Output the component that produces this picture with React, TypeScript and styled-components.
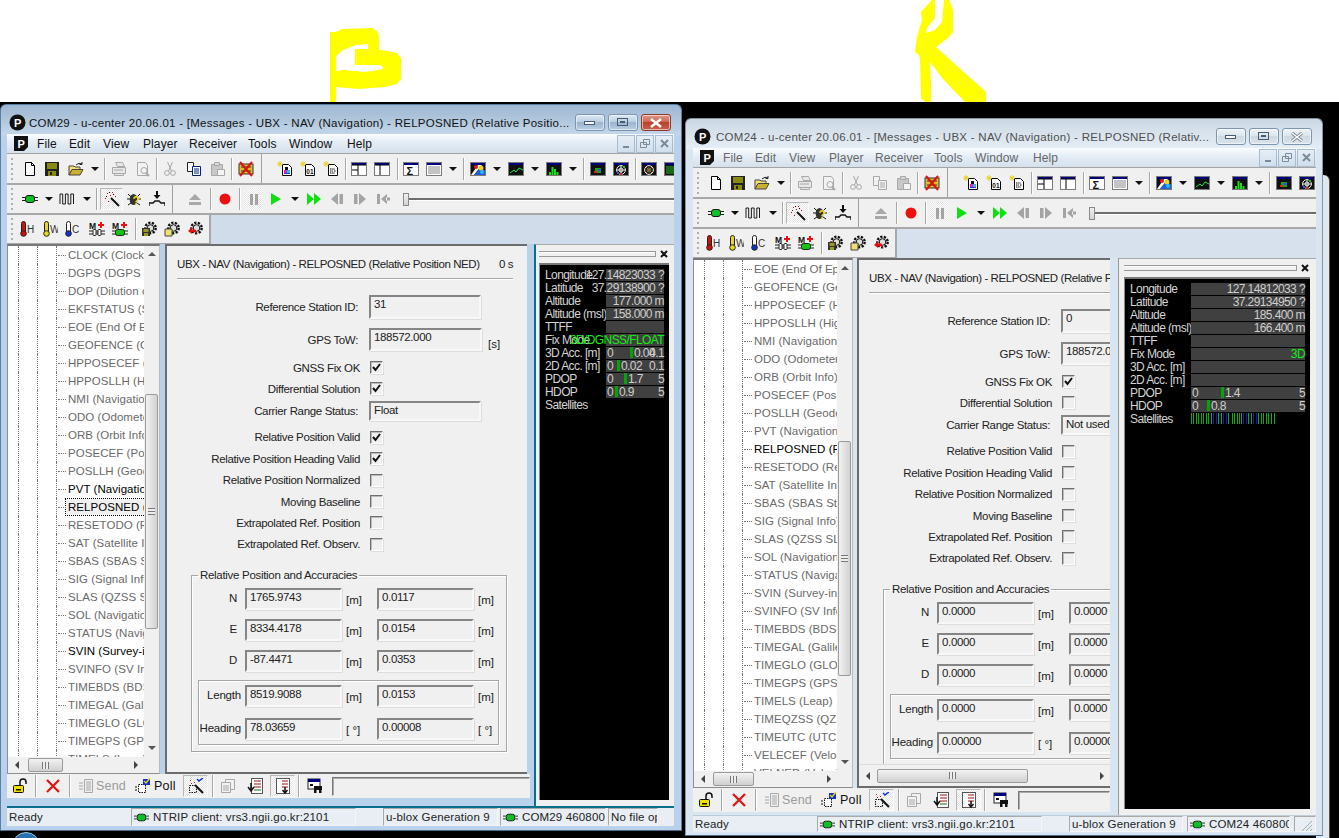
import React from "react";
import styled, { createGlobalStyle } from "styled-components";

const SANS = `"Liberation Sans", Arial, sans-serif`;

const Global = createGlobalStyle`
  html, body { margin: 0; padding: 0; width: 1339px; height: 838px; overflow: hidden; background: #000; }
  * { box-sizing: border-box; }
`;

const Desktop = styled.div`
  position: relative;
  width: 1339px;
  height: 838px;
  overflow: hidden;
  background: linear-gradient(#fff 0 102px, #000 102px);
  font-family: ${SANS};
`;
const Scribble = styled.svg`
  position: absolute;
  left: 0;
  top: 0;
`;
const BehindWindow = styled.div`
  position: absolute;
  left: 1316px;
  top: 175px;
  width: 14px;
  height: 670px;
  border-radius: 0 6px 0 0;
  background: #dfe8f1;
  border-right: 1px solid #555;
`;
const Orb = styled.div`
  position: absolute;
  left: 12px;
  top: 832px;
  width: 28px;
  height: 28px;
  border-radius: 50%;
  background: #2a6fb0;
  border: 1px solid #9cc;
`;

const Frame = styled.div<{ $l: number; $t: number; $w: number; $h: number; $active: boolean }>`
  position: absolute;
  left: ${(p) => p.$l}px;
  top: ${(p) => p.$t}px;
  width: ${(p) => p.$w}px;
  height: ${(p) => p.$h}px;
  display: flex;
  flex-direction: column;
  border-radius: 6px 6px 0 0;
  border: 1px solid ${(p) => (p.$active ? "#5a7fa0" : "#8a949e")};
  border-bottom-color: #4a6a88;
  background: ${(p) =>
    p.$active ? "linear-gradient(#9db6d0 0, #c4d7ea 30px, #b9d1ea 31px)" : "linear-gradient(#cbd8e4 0, #e6eef6 30px, #d9e5f1 31px)"};
  overflow: hidden;
`;
const TitleBar = styled.div`
  flex: none;
  height: 29px;
  display: flex;
  align-items: center;
  padding: 6px 10px 0 0;
`;
const TitleIcon = styled.svg`
  flex: none;
  width: 17px;
  height: 17px;
  margin-left: 8px;
`;
const TitleText = styled.div<{ $active: boolean; $ml: number }>`
  flex: 1;
  min-width: 0;
  margin-left: ${(p) => p.$ml}px;
  font-size: 11.5px;
  letter-spacing: 0.27px;
  white-space: nowrap;
  overflow: hidden;
  color: ${(p) => (p.$active ? "#111" : "#4f4f4f")};
`;
const CaptionBtn = styled.div<{ $red?: boolean; $active: boolean }>`
  flex: none;
  width: 30px;
  height: 17px;
  margin-left: 3px;
  border-radius: 3px;
  border: 1px solid ${(p) => (p.$red && p.$active ? "#8b3a2c" : "#7d96b0")};
  background: ${(p) =>
    p.$red && p.$active
      ? "linear-gradient(#e09a88 0, #c96a55 45%, #b5412c 50%, #c96450 100%)"
      : p.$active
      ? "linear-gradient(#dce8f4 0, #bcd0e4 45%, #9cb6d0 50%, #b8cee2 100%)"
      : "linear-gradient(#eef3f8 0, #dde6ee 45%, #cdd8e2 50%, #dbe4ec 100%)"};
  box-shadow: inset 0 0 0 1px rgba(255, 255, 255, 0.55);
  display: flex;
  align-items: center;
  justify-content: center;
  svg { display: block; }
`;
const Client = styled.div<{ $pl: number; $pr: number }>`
  flex: 1;
  min-height: 0;
  display: flex;
  flex-direction: column;
  margin-left: ${(p) => p.$pl}px;
  margin-right: ${(p) => p.$pr}px;
`;
const MenuBar = styled.div`
  flex: none;
  height: 20px;
  display: flex;
  align-items: center;
  padding-left: 7px;
  background: linear-gradient(#fbfdff 0, #e6eef6 40%, #d4e0ec 100%);
  border-bottom: 1px solid #a4a4a4;
`;
const MenuLogo = styled.svg`
  flex: none;
  width: 15px;
  height: 16px;
  margin-right: 8px;
`;
const MenuItem = styled.span<{ $w: number; $active: boolean }>`
  flex: none;
  width: ${(p) => p.$w}px;
  font-size: 12px;
  letter-spacing: 0.1px;
  color: ${(p) => (p.$active ? "#111" : "#666")};
`;
const MdiGroup = styled.div`
  margin-left: auto;
  display: flex;
  gap: 1px;
  margin-right: 1px;
`;
const MdiBtn = styled.div`
  width: 18px;
  height: 18px;
  border: 1px solid #a8bcd0;
  background: linear-gradient(#e6eef6, #d0deec);
  display: flex;
  align-items: center;
  justify-content: center;
`;
const ToolRow = styled.div<{ $h: number }>`
  flex: none;
  height: ${(p) => p.$h}px;
  display: flex;
  align-items: center;
  background: #f0f0f0;
  border-bottom: 2px solid #a8a8a8;
  overflow: hidden;
`;
const ToolRow3Wrap = styled.div<{ $active: boolean }>`
  flex: none;
  height: 29px;
  display: flex;
  background: ${(p) => (p.$active ? "#d0dcea" : "#d6e1ed")};
`;
const ToolRow3 = styled.div`
  flex: none;
  width: 204px;
  display: flex;
  align-items: center;
  background: #f0f0f0;
  border-right: 2px solid #a8a8a8;
  border-bottom: 1px solid #a8a8a8;
`;
const Cell = styled.div<{ $w: number }>`
  flex: none;
  width: ${(p) => p.$w}px;
  height: 22px;
  display: flex;
  align-items: center;
  justify-content: center;
  overflow: visible;
  svg { display: block; flex: none; }
`;
const PressedCell = styled(Cell)`
  border: 1px solid;
  border-color: #b8b8b8 #fafafa #fafafa #b8b8b8;
  background: repeating-conic-gradient(#fff 0 25%, #e4e4e4 0 50%) 0 0 / 2px 2px;
`;
const HatchCell = styled(Cell)`
  background: repeating-conic-gradient(#fff 0 25%, #e4e4e4 0 50%) 0 0 / 2px 2px;
`;
const Grip = styled.div`
  flex: none;
  width: 13px;
  height: 22px;
  padding-left: 4px;
  display: flex;
  flex-direction: column;
  justify-content: space-between;
  i { display: block; width: 2px; height: 2px; background: #b0b0b0; }
`;
const Divider = styled.div<{ $w?: number }>`
  flex: none;
  width: ${(p) => p.$w ?? 2}px;
  height: 22px;
  display: flex;
  justify-content: center;
  &::after { content: ""; width: 1px; background: #a6a6a6; box-shadow: 1px 0 0 #fff; }
`;
const SectionEnd = styled.div<{ $w: number }>`
  flex: none;
  width: ${(p) => p.$w}px;
  height: 100%;
  display: flex;
  justify-content: center;
  &::after { content: ""; width: 1px; background: #a0a0a0; }
`;
const Drop = styled.div<{ $w: number }>`
  flex: none;
  width: ${(p) => p.$w}px;
  display: flex;
  justify-content: center;
  &::after { content: ""; border: 4px solid transparent; border-top: 4px solid #111; border-bottom: 0; }
`;
const Spacer = styled.div<{ $w: number }>`
  flex: none;
  width: ${(p) => p.$w}px;
`;
const SliderBox = styled.div`
  flex: 1;
  min-width: 0;
  display: flex;
  align-items: center;
  height: 14px;
`;
const SliderThumb = styled.div`
  flex: none;
  width: 6px;
  height: 13px;
  background: linear-gradient(#eee, #d4d4d4);
  border: 1px solid #8a8a8a;
`;
const SliderTrack = styled.div`
  flex: 1;
  height: 3px;
  background: #6e6e6e;
  border-bottom: 1px solid #fff;
`;

const MainRow = styled.div<{ $h: number; $gap: number; $active: boolean }>`
  flex: none;
  height: ${(p) => p.$h}px;
  display: flex;
  gap: ${(p) => p.$gap}px;
  background: ${(p) => (p.$active ? "#b9d1ea" : "#d9e5f1")};
`;
const LeftColumn = styled.div<{ $w: number }>`
  flex: none;
  width: ${(p) => p.$w}px;
  height: 554px;
  display: flex;
  flex-direction: column;
`;
const Panes = styled.div<{ $gap: number }>`
  flex: none;
  height: 530px;
  display: flex;
  gap: ${(p) => p.$gap}px;
`;
const TreePane = styled.div<{ $w: number }>`
  flex: none;
  width: ${(p) => p.$w}px;
  display: grid;
  grid-template-columns: 1fr 15px;
  grid-template-rows: 1fr 16px;
  border: 1px solid #8e8e8e;
  border-top: 2px solid #777;
  border-right: 1px solid #bbb;
  background: #f0f0f0;
  overflow: hidden;
`;
const TreeList = styled.div`
  background: #fff;
  overflow: hidden;
  min-width: 0;
`;
const TreeRow = styled.div<{ $on?: boolean }>`
  height: 18px;
  display: flex;
  align-items: center;
  white-space: nowrap;
  font-size: 11.5px;
  letter-spacing: 0.05px;
  padding-left: 10px;
  color: ${(p) => (p.$on ? "#000" : "#6a6a6a")};
`;
const Guide = styled.div<{ $w: number; $branch?: boolean }>`
  flex: none;
  width: ${(p) => p.$w}px;
  height: 18px;
  border-left: 1px dotted #777;
  position: relative;
  ${(p) =>
    p.$branch
      ? `&::after { content: ""; position: absolute; left: 1px; right: 0; top: 9px; border-top: 1px dotted #777; }`
      : ""}
`;
const TreeLabel = styled.span<{ $focus?: boolean }>`
  padding: 1px 1px 1px 2px;
  line-height: 14px;
  outline: ${(p) => (p.$focus ? "1px dotted #000" : "none")};
  background: ${(p) => (p.$focus ? "#f0f0f0" : "transparent")};
  flex: 1 0 auto;
`;
const VBar = styled.div`
  background: #f0f0f0;
  position: relative;
  display: flex;
  flex-direction: column;
  align-items: center;
  padding-top: 6px;
`;
const ScrollThumbV = styled.div<{ $top: number; $h: number }>`
  width: 13px;
  height: ${(p) => p.$h}px;
  margin-top: ${(p) => p.$top}px;
  border: 1px solid #9a9a9a;
  border-radius: 2px;
  background: linear-gradient(90deg, #f2f2f2, #d2d2d2);
  display: flex;
  align-items: center;
  justify-content: center;
`;
const ScrollThumbH = styled.div<{ $left: number; $w: number }>`
  height: 14px;
  width: ${(p) => p.$w}px;
  margin-left: ${(p) => p.$left}px;
  border: 1px solid #9a9a9a;
  border-radius: 2px;
  background: linear-gradient(#f2f2f2, #d0d0d0);
  flex: none;
  display: flex;
  align-items: center;
  justify-content: center;
`;
const HBar = styled.div`
  display: flex;
  align-items: center;
  background: #f0f0f0;
  position: relative;
  min-width: 0;
  height: 100%;
`;
const ArrowUp = styled.div`
  width: 0; height: 0; flex: none;
  border: 4px solid transparent; border-bottom: 4px solid #555; border-top: 0;
`;
const ArrowDown = styled.div`
  position: absolute; bottom: 7px;
  width: 0; height: 0;
  border: 4px solid transparent; border-top: 4px solid #555; border-bottom: 0;
`;
const ArrowLeft = styled.div`
  position: absolute; left: 7px; top: calc(50% - 4px);
  width: 0; height: 0;
  border: 4px solid transparent; border-right: 4px solid #444; border-left: 0;
`;
const ArrowRight = styled.div`
  position: absolute; right: 6px; top: calc(50% - 4px);
  width: 0; height: 0;
  border: 4px solid transparent; border-left: 4px solid #444; border-right: 0;
`;
const Grips = styled.div<{ $v?: boolean }>`
  width: 7px;
  height: 7px;
  background: ${(p) =>
    p.$v
      ? "repeating-linear-gradient(#777 0 1px, #eee 1px 3px)"
      : "repeating-linear-gradient(90deg, #777 0 1px, #eee 1px 3px)"};
`;

const MessagePane = styled.div<{ $w: number }>`
  flex: none;
  width: ${(p) => p.$w}px;
  display: flex;
  flex-direction: column;
  background: #f0f0f0;
  border-left: 2px solid #6c6c6c;
  border-top: 2px solid #6c6c6c;
  border-bottom: 2px solid #6c6c6c;
  overflow: hidden;
`;
const MessageScroll = styled.div`
  flex: 1;
  min-height: 0;
  overflow: hidden;
`;
const MessageBody = styled.div`
  width: 360px;
`;
const MsgBar = styled(HBar)`
  flex: none;
  height: 22px;
  border-top: 1px solid #ddd;
`;
const HeaderLine = styled.div`
  margin: 0 14px 0 10px;
  height: 33px;
  padding-top: 11px;
  display: flex;
  justify-content: space-between;
  border-bottom: 1px solid #a8a8a8;
  box-shadow: 0 1px 0 #fff;
  font-size: 11.5px;
  letter-spacing: -0.42px;
  line-height: 14px;
  color: #222;
  white-space: nowrap;
`;
const FormRow = styled.div<{ $h: number; $mt?: number }>`
  height: ${(p) => p.$h}px;
  margin-top: ${(p) => p.$mt ?? 0}px;
  display: flex;
  align-items: center;
  font-size: 11.5px;
  color: #222;
  white-space: nowrap;
`;
const RowLabel = styled.div<{ $w: number }>`
  flex: none;
  width: ${(p) => p.$w}px;
  text-align: right;
  letter-spacing: -0.35px;
`;
const Field = styled.div<{ $w: number; $h?: number }>`
  flex: none;
  width: ${(p) => p.$w}px;
  height: ${(p) => p.$h ?? 22}px;
  margin-left: 11px;
  padding: 1px 3px;
  line-height: 13px;
  font-size: 11.5px;
  letter-spacing: -0.35px;
  color: #222;
  border: 2px solid;
  border-color: #858585 #f8f8f8 #f8f8f8 #858585;
  box-shadow: 1px 1px 0 #dcdcdc;
  background: #f0f0f0;
  overflow: hidden;
`;
const Unit = styled.span`
  margin: 8px 0 0 6px;
  font-size: 11.5px;
`;
const CheckBox = styled.div`
  flex: none;
  width: 13px;
  height: 13px;
  margin-left: 10px;
  border: 1px solid;
  border-color: #6f6f6f #fff #fff #6f6f6f;
  box-shadow: inset 1px 1px 0 #bbb, 1px 1px 0 #ddd;
  background: #f0f0f0;
  display: flex;
  align-items: center;
  justify-content: center;
`;
const Group = styled.fieldset`
  width: 316px;
  height: 184px;
  margin: 13px 0 0 24px;
  padding: 6px 0 0 0;
  border: 1px solid #a6a6a6;
  box-shadow: 1px 1px 0 #fff, inset 1px 1px 0 #fff;
  font-size: 11.5px;
  color: #222;
`;
const GroupLegend = styled.legend`
  margin-left: 6px;
  padding: 0 2px;
  line-height: 14px;
  font-size: 11.5px;
  letter-spacing: -0.3px;
  white-space: nowrap;
`;
const InnerGroup = styled.div`
  width: 301px;
  height: 65px;
  margin: 8px 0 0 6px;
  border: 1px solid #a6a6a6;
  box-shadow: 1px 1px 0 #fff, inset 1px 1px 0 #fff;
  padding-top: 4px;
`;
const DataRow = styled.div<{ $pad: number; $mb: number }>`
  display: flex;
  align-items: flex-start;
  height: 22px;
  padding-left: ${(p) => p.$pad}px;
  margin-bottom: ${(p) => p.$mb}px;
  white-space: nowrap;
`;
const DataLabel = styled.div<{ $pr: number }>`
  flex: none;
  width: 43px;
  text-align: right;
  padding-right: ${(p) => p.$pr}px;
  padding-top: 4px;
  letter-spacing: -0.2px;
`;
const DataField = styled(Field)`
  margin-left: 3px;
`;
const DataUnit = styled.div<{ $w: number }>`
  flex: none;
  width: ${(p) => p.$w}px;
  padding: 6px 0 0 4px;
`;
const DataField2 = styled(Field)`
  margin-left: 0;
`;

const BottomBar = styled.div`
  flex: none;
  height: 24px;
  display: flex;
  align-items: center;
  background: #f0f0f0;
  font-size: 12.5px;
  letter-spacing: 0.2px;
  overflow: hidden;
`;
const ToolText = styled.span<{ $grey?: boolean; $w: number }>`
  flex: none;
  width: ${(p) => p.$w}px;
  color: ${(p) => (p.$grey ? "#9a9a9a" : "#111")};
  white-space: nowrap;
`;
const EditBox = styled.div`
  flex: 1;
  min-width: 0;
  height: 19px;
  border: 1px solid;
  border-color: #777 #eee #eee #777;
  box-shadow: inset 1px 1px 0 #aaa;
`;

const Dock = styled.div<{ $w: number; $pl: number; $pr: number; $teal: boolean }>`
  flex: none;
  width: ${(p) => p.$w}px;
  padding: 0 ${(p) => p.$pr}px 6px ${(p) => p.$pl}px;
  background: #f0f0f0;
  border-left: ${(p) => (p.$teal ? "2px solid #0a6f8c" : "1px solid #999")};
  border-top: 1px solid #aaa;
  display: flex;
  flex-direction: column;
`;
const DockHead = styled.div`
  flex: none;
  height: 18px;
  display: flex;
  align-items: center;
  gap: 4px;
`;
const DockLines = styled.div`
  flex: 1;
  height: 6px;
  border-top: 1px solid #999;
  border-bottom: 1px solid #999;
  box-shadow: inset 0 1px 0 #fff;
  border-right: 1px solid #999;
`;
const DockClose = styled.svg`
  flex: none;
  width: 8px;
  height: 8px;
  margin-right: 1px;
`;
const Readout = styled.div`
  flex: 1;
  min-height: 0;
  background: #000;
  border-top: 2px solid #777;
  border-left: 1px solid #888;
  padding-top: 4px;
  font-size: 12px;
  letter-spacing: -0.6px;
  color: #d4d4d4;
`;
const ReadRow = styled.div<{ $pl: number }>`
  height: 13px;
  padding: 0 5px 1px ${(p) => p.$pl}px;
  display: flex;
  line-height: 12px;
  white-space: nowrap;
`;
const ReadLabel = styled.div`
  flex: none;
  width: 61px;
`;
const ReadValue = styled.div<{ $green?: boolean }>`
  flex: 1;
  min-width: 0;
  display: flex;
  justify-content: flex-end;
  background: #404040;
  color: ${(p) => (p.$green ? "#14ee14" : "#cfcfcf")};
`;
const BarValue = styled.div`
  flex: 1;
  min-width: 0;
  display: flex;
  background: #404040;
  color: #cfcfcf;
  padding-left: 1px;
`;
const BarMin = styled.span`
  flex: none;
  width: 0;
`;
const BarMark = styled.span<{ $at: number }>`
  flex: none;
  width: 3px;
  height: 11px;
  margin-left: ${(p) => p.$at}px;
  margin-right: 1px;
  background: #02a602;
`;
const BarMax = styled.span`
  flex: 1;
  display: flex;
  justify-content: flex-end;
  min-width: 0;
  width: 0;
`;
const SatStrip = styled.svg`
  flex: none;
  display: block;
`;

const StatusBar = styled.div<{ $h: number; $teal: boolean }>`
  flex: none;
  height: ${(p) => p.$h}px;
  display: flex;
  align-items: stretch;
  background: #e8eef4;
  border-top: ${(p) => (p.$teal ? "2px solid #0a6f8c" : "1px solid #c0ccd8")};
  font-size: 11.5px;
  letter-spacing: 0.15px;
  color: #222;
  white-space: nowrap;
`;
const StatusCell = styled.div<{ $w: number; $plain?: boolean; $ml?: number }>`
  flex: none;
  width: ${(p) => p.$w}px;
  margin-left: ${(p) => p.$ml ?? 0}px;
  display: flex;
  align-items: center;
  gap: 4px;
  padding: 0 2px;
  overflow: hidden;
  border: ${(p) => (p.$plain ? "0" : "1px solid")};
  border-color: #aaa #f6f6f6 #f6f6f6 #aaa;
  svg { flex: none; display: block; }
`;

/* ---- drawings ---- */

const S = ({ n, s = 16 }: { n: string; s?: number }) => (
  <svg width={s} height={s} viewBox="0 0 16 16">
    {ICONS[n]}
  </svg>
);
const gry = "#a8a8a8";
const T = (p: { x: number; y: number; s: number; c?: string; b?: boolean; children: string }) => (
  <text
    x={p.x}
    y={p.y}
    fontSize={p.s}
    fill={p.c ?? "#111"}
    fontWeight={p.b ? 700 : 400}
    fontFamily="Liberation Sans, sans-serif"
  >
    {p.children}
  </text>
);
const Plug = ({ y = 8 }: { y?: number }) => (
  <g>
    <path d={`M0 ${y - 1.5}h3M0 ${y + 1.5}h3M13 ${y - 1.5}h3M13 ${y + 1.5}h3`} stroke="#222" strokeWidth="1" />
    <rect x="3.5" y={y - 3.5} width="9" height="7" rx="2.5" fill="#13c413" stroke="#111" />
    <path d={`M7 ${y - 3}v6M9.5 ${y - 3}v6`} stroke="#0b5" />
  </g>
);
const Win = ({ children, bg = "#fff" }: { children?: React.ReactNode; bg?: string }) => (
  <g>
    <rect x="0.5" y="1.5" width="15" height="13" fill={bg} stroke="#7a7a7a" />
    <rect x="1" y="2" width="14" height="2" fill="#000080" />
    {children}
  </g>
);
const Sparkle = () => (
  <g>
    <path d="M1 1l4 4M5 1L1 5M3 0v6M0 3h6" stroke="#e8d020" strokeWidth="1" />
  </g>
);
const Gear = ({ children }: { children?: React.ReactNode }) => (
  <g>
    <circle cx="9.5" cy="7" r="5.2" fill="none" stroke="#111" strokeWidth="2.4" strokeDasharray="2.2 1.4" />
    <circle cx="9.5" cy="7" r="3.3" fill="#ddd" stroke="#111" />
    {children}
  </g>
);
const Thermo = ({ fill, bulb, letter }: { fill: string; bulb: string; letter: string }) => (
  <g>
    <rect x="2.5" y="0.5" width="4" height="12" rx="2" fill={fill} stroke="#222" />
    <circle cx="4.5" cy="12.5" r="2.8" fill={bulb} stroke="#222" />
    <T x={8} y={12} s={10} c="#333">
      {letter}
    </T>
  </g>
);

const ICONS: Record<string, React.ReactNode> = {
  new: (
    <g fill="#fff" stroke="#000">
      <path d="M3.5 1.5h6l3 3v10h-9z" />
      <path d="M9.5 1.5v3h3" fill="none" />
    </g>
  ),
  save: (
    <g>
      <rect x="1" y="1" width="14" height="14" fill="#222" />
      <rect x="3" y="2" width="10" height="6" fill="#8a8a10" />
      <rect x="4" y="10" width="8" height="5" fill="#8a8a10" />
      <rect x="6" y="11" width="2" height="3" fill="#222" />
    </g>
  ),
  open: (
    <g>
      <path d="M1 5h5l1 1h5v3H4l-3 5z" fill="#f4e070" stroke="#444" />
      <path d="M4 8.5h11l-3 5.5H1z" fill="#cbb22e" stroke="#444" />
      <path d="M8 4q3-3 6-1M14 1v2.5h-2.5" fill="none" stroke="#222" />
    </g>
  ),
  print: (
    <g fill="#e8e8e8" stroke={gry}>
      <path d="M4.5 1.5h7l2 4h-7z" />
      <path d="M1.5 6.5h13v6h-13z" />
      <path d="M3.5 12.5h9v2h-9z" />
      <path d="M3 9h9" />
    </g>
  ),
  preview: (
    <g fill="#f2f2f2" stroke={gry}>
      <path d="M2.5 1.5h8l2 3v10h-10z" />
      <circle cx="9" cy="9.5" r="3" />
      <path d="M11 12l3 3" strokeWidth="2" />
    </g>
  ),
  cut: (
    <g fill="none" stroke={gry}>
      <circle cx="5" cy="12" r="2.4" />
      <circle cx="11" cy="12" r="2.4" />
      <path d="M5.5 1l4 9M10.5 1l-4 9" />
    </g>
  ),
  copy: (
    <g fill="#fff" stroke="#002080">
      <path d="M1.5 1.5h6v9h-6z" stroke="#222" />
      <path d="M6.5 5.5h8v9h-8z" />
      <path d="M8 8h5M8 10h5M8 12h5" stroke="#002080" />
    </g>
  ),
  copyG: (
    <g fill="#f2f2f2" stroke={gry}>
      <path d="M1.5 1.5h6v9h-6z" />
      <path d="M6.5 5.5h8v9h-8z" />
      <path d="M8 8h5M8 10h5M8 12h5" />
    </g>
  ),
  paste: (
    <g stroke={gry}>
      <path d="M1.5 3.5h11v11h-11z" fill="#c8c8c8" />
      <path d="M4.5 1.5h5v3h-5z" fill="#d8d8d8" />
      <path d="M7.5 8.5h7v6h-7z" fill="#f4f4f4" />
    </g>
  ),
  flash: (
    <g>
      <rect x="1" y="3" width="14" height="10" fill="#d8c030" stroke="#333" />
      <path d="M3 6h10M3 10h10" stroke="#333" />
      <path d="M2 1l12 14M14 1L2 15" stroke="#e01010" strokeWidth="2" />
    </g>
  ),
  ubxColor: (
    <g>
      <path d="M5.5 3.5h6l3 3v8h-9z" fill="#fff" stroke="#000" />
      <Sparkle />
      <rect x="7" y="9" width="3" height="3" fill="#e020c0" />
      <rect x="10" y="9" width="3" height="3" fill="#20c0e0" />
      <rect x="8" y="6" width="3" height="3" fill="#111" />
      <rect x="7" y="12" width="6" height="1" fill="#2040e0" />
    </g>
  ),
  ubx01: (
    <g>
      <path d="M5.5 3.5h6l3 3v8h-9z" fill="#fff" stroke="#000" />
      <Sparkle />
      <T x={6.3} y={13} s={6.5} b>
        01
      </T>
    </g>
  ),
  ubxText: (
    <g>
      <path d="M5.5 3.5h6l3 3v8h-9z" fill="#fff" stroke="#000" />
      <Sparkle />
      <path d="M7 8h5M7 10h3M11 10h2M7 12h5" stroke="#000" strokeDasharray="1.5 .7" />
    </g>
  ),
  layout1: (
    <g>
      <Win />
      <path d="M1 4h14M7 4v10M1 9h6" stroke="#000" fill="none" />
    </g>
  ),
  layout2: (
    <g>
      <Win />
      <path d="M1 4h14M6 4v10" stroke="#000" fill="none" />
    </g>
  ),
  sigma: (
    <Win>
      <T x={3.5} y={13.5} s={11} b>
        Σ
      </T>
    </Win>
  ),
  table: (
    <Win>
      <path d="M2 6h12M2 8h12M2 10h12M2 12h12" stroke="#888" />
    </Win>
  ),
  colorMap: (
    <Win bg="#111">
      <path d="M1 14L8 4h4l-8 10z" fill="#f8f8f8" />
      <path d="M4 14l5-6 6 1v5z" fill="#2060e0" />
      <circle cx="11" cy="7" r="2.5" fill="#f0d020" />
      <circle cx="12" cy="11" r="2" fill="#20c0e0" />
      <circle cx="6" cy="6" r="2" fill="#e02020" />
    </Win>
  ),
  chart: (
    <Win bg="#111">
      <path d="M2 12l4-3 2 2 3-4 4 2" stroke="#20e050" fill="none" />
    </Win>
  ),
  bars: (
    <Win bg="#111">
      <path d="M4 14v-3M6.500 14V6M9 14V8M11.500 14v-3" stroke="#14e014" strokeWidth="2" />
    </Win>
  ),
  dark: (
    <Win bg="#111">
      <rect x="5" y="7" width="6" height="5" fill="#1aa01a" />
      <rect x="4" y="10" width="3" height="2" fill="#e02020" />
      <rect x="8" y="8" width="3" height="2" fill="#2060e0" />
    </Win>
  ),
  sat: (
    <Win bg="#111">
      <circle cx="8" cy="9" r="4.400" fill="none" stroke="#eee" />
      <circle cx="8" cy="9" r="2" fill="none" stroke="#eee" />
      <path d="M3 9h10M8 4.500v9" stroke="#ddd" />
      <rect x="10" y="5" width="2" height="2" fill="#20c020" />
      <rect x="4" y="11" width="2" height="2" fill="#2060e0" />
      <rect x="7" y="12" width="2" height="2" fill="#e02020" />
    </Win>
  ),
  ring: (
    <Win bg="#111">
      <circle cx="8" cy="9" r="4.400" fill="none" stroke="#eee" />
      <circle cx="8" cy="9" r="2" fill="none" stroke="#20c020" />
      <path d="M5 6l6 6M11 6l-6 6" stroke="#e04040" />
    </Win>
  ),
  gridG: (
    <Win bg="#111">
      <path d="M2 6h12M2 8h12M2 10h12M2 12h12" stroke="#20c020" />
    </Win>
  ),
  plug: <Plug />,
  wave: (
    <path d="M0 13V3h3v10h3V3h3v10h3V3h3v10" transform="translate(1 0) scale(.9 1)" fill="none" stroke="#111" />
  ),
  wand: (
    <g>
      <path d="M7 7l8 8" stroke="#111" strokeWidth="2" />
      <path d="M3 2h1v1H3zM8 1h1v1H8zM1 7h1v1H1zM11 5h1v1h-1zM6 4h1v1H6zM4 10h1v1H4z" fill="#c01010" />
      <path d="M2 5h1v1H2zM9 3h1v1H9zM5 1h1v1H5z" fill="#111" />
    </g>
  ),
  bug: (
    <g>
      <path d="M2 3l3 3M14 3l-3 3M1 8h3M15 8h-3M2 14l3-2M14 14l-3-2" stroke="#111" />
      <ellipse cx="7.500" cy="8.500" rx="3.800" ry="5.500" fill="#333" />
      <T x={6.5} y={13.5} s={12} b c="#f0d810">
        ?
      </T>
    </g>
  ),
  antenna: (
    <g>
      <path d="M8 0v6" stroke="#111" strokeWidth="2" />
      <path d="M4.500 4h7L8 8z" fill="#111" />
      <path d="M0 15v-3h4l2-2h4l2 2h4v3" fill="none" stroke="#111" strokeWidth="1.400" />
    </g>
  ),
  eject: (
    <g fill="#a8a8a8">
      <path d="M8 3l6 6H2z" />
      <rect x="2" y="11" width="12" height="3" />
    </g>
  ),
  record: <circle cx="8" cy="8" r="5.500" fill="#ee0f0f" />,
  pause: (
    <g fill="#a4a4a4">
      <rect x="4" y="3" width="3" height="11" />
      <rect x="9" y="3" width="3" height="11" />
    </g>
  ),
  play: <path d="M3 2l10 6-10 6z" fill="#0fe00f" />,
  ff: <path d="M1 2l7 6-7 6zM8 2l7 6-7 6z" fill="#0fe00f" />,
  prev: (
    <g fill="#a4a4a4">
      <path d="M9 2L2 8l7 6z" />
      <rect x="10.500" y="3" width="3.500" height="10" />
    </g>
  ),
  next: (
    <g fill="#a4a4a4">
      <rect x="2" y="3" width="3.500" height="10" />
      <path d="M7 2l7 6-7 6z" />
    </g>
  ),
  rew: (
    <g fill="#a4a4a4">
      <rect x="2" y="3" width="3" height="10" />
      <path d="M12 3L6 8l6 5zM11 6.500h4v3h-4z" />
    </g>
  ),
  thH: <Thermo fill="#d01010" bulb="#d01010" letter="H" />,
  thW: <Thermo fill="#e8d820" bulb="#e8d820" letter="W" />,
  thC: <Thermo fill="#fff" bulb="#1030d0" letter="C" />,
  mPlus0: (
    <g>
      <T x={0} y={7.500} s={8.500} b>
        M
      </T>
      <path d="M12 1v6M9 4h6" stroke="#ee1010" strokeWidth="2" />
      <path d="M0 10h4M0 13h4M12 10h4M12 13h4M8 9v5" stroke="#222" />
      <rect x="4" y="8.500" width="3" height="6" rx="1" fill="#fff" stroke="#222" />
      <rect x="9" y="8.500" width="3" height="6" rx="1" fill="#fff" stroke="#222" />
    </g>
  ),
  mPlus1: (
    <g>
      <T x={0} y={7.500} s={8.500} b>
        M
      </T>
      <path d="M12 1v6M9 4h6" stroke="#ee1010" strokeWidth="2" />
      <path d="M0 10h4M0 13h4M12 10h4M12 13h4" stroke="#222" />
      <rect x="3.500" y="8.500" width="9" height="6" rx="2" fill="#13c413" stroke="#222" />
    </g>
  ),
  gearSave: (
    <Gear>
      <rect x="1" y="7" width="8" height="8" fill="#333" />
      <rect x="2.500" y="8" width="5" height="3" fill="#9a9a20" />
      <rect x="3" y="12" width="4" height="3" fill="#9a9a20" />
    </Gear>
  ),
  gearOpen: (
    <Gear>
      <path d="M1 8h7v7H1z" fill="#f0e070" stroke="#444" />
    </Gear>
  ),
  gearUndo: (
    <Gear>
      <path d="M1 10l4-4v2.500h3.500L10 13 7 11H5v2z" fill="#e01010" />
    </Gear>
  ),
  lock: (
    <g>
      <path d="M8 7V4a3 3 0 016 0v2" fill="none" stroke="#111" strokeWidth="1.500" />
      <rect x="1.500" y="7.500" width="10" height="7" rx="1" fill="#f0e000" stroke="#111" />
      <rect x="4" y="11" width="5" height="1.500" fill="#111" />
    </g>
  ),
  del: <path d="M2 2l12 12M14 2L2 14" stroke="#e01414" strokeWidth="2.200" />,
  send: (
    <g fill="none" stroke={gry}>
      <path d="M6.500 1.500h8v13h-8z" />
      <path d="M8 4h5M8 6h5M8 8h5M8 10h5M8 12h5M1 5h4M1 8h4M1 11h4" />
    </g>
  ),
  poll: (
    <g>
      <path d="M3.500 6.500h7v8h-7z" fill="#fff" stroke="#111" strokeDasharray="1.500 1" />
      <rect x="8" y="1" width="7" height="6" fill="#1030d0" />
      <path d="M9 3l2 2 4-5" stroke="#e8d810" fill="none" strokeWidth="1.400" />
      <path d="M0 9h2M0 12h2" stroke="#111" />
    </g>
  ),
  pollWand: (
    <g>
      <path d="M1.500 7.500h7v7h-7z" fill="none" stroke="#111" strokeDasharray="1.500 1" />
      <path d="M7 7l8 8" stroke="#111" strokeWidth="2" />
      <path d="M9 1l2 2 4-3" stroke="#1030d0" fill="none" strokeWidth="1.500" />
      <path d="M2 2h1v1H2zM6 4h1v1H6zM3 5h1v1H3z" fill="#c01010" />
    </g>
  ),
  docsG: (
    <g fill="#f2f2f2" stroke={gry}>
      <path d="M5.500 1.500h9v10h-9z" />
      <path d="M1.500 4.500h9v10h-9z" />
      <path d="M3 8h6M3 10h6M3 12h6" />
    </g>
  ),
  listIn: (
    <g>
      <rect x="4.500" y="0.500" width="11" height="15" fill="#fff" stroke="#555" />
      <path d="M7 3h7M7 6h7M7 9h7" stroke="#a01010" />
      <path d="M7 12h7" stroke="#107010" />
      <path d="M4 5v7M1 9l3 4 3-4" fill="none" stroke="#111" strokeWidth="1.500" />
    </g>
  ),
  listDown: (
    <g>
      <rect x="1.500" y="0.500" width="13" height="15" fill="#fff" stroke="#555" />
      <path d="M7 3h6M7 6h6M7 9h6" stroke="#a01010" />
      <path d="M10 9v6M7.500 12l2.500 3 2.500-3" fill="none" stroke="#111" strokeWidth="1.500" />
    </g>
  ),
  printer: (
    <g>
      <rect x="1" y="1" width="12" height="10" fill="#fff" stroke="#222" />
      <rect x="1" y="1" width="12" height="3" fill="#000080" />
      <rect x="3" y="6" width="3" height="2" fill="#111" />
      <rect x="7" y="8" width="8" height="4" fill="#111" />
      <rect x="7" y="12" width="2.500" height="3" fill="#111" />
      <rect x="12" y="12" width="2.500" height="3" fill="#111" />
    </g>
  ),
  resize: <path d="M15 5L5 15M15 9l-6 6M15 13l-2 2" stroke="#9aa" />,
};

/* ---- toolbars ---- */

type Item =
  | { k: "i" | "p" | "h"; n: string; w: number }
  | { k: "d" | "s" | "e" | "x"; w: number }
  | { k: "g" | "slider" };

const i = (n: string, w: number): Item => ({ k: "i", n, w });
const p = (n: string, w: number): Item => ({ k: "p", n, w });
const h = (n: string, w: number): Item => ({ k: "h", n, w });
const d = (w: number): Item => ({ k: "d", w });
const s = (w: number): Item => ({ k: "s", w });
const e = (w: number): Item => ({ k: "e", w });
const x = (w: number): Item => ({ k: "x", w });
const g: Item = { k: "g" };

const row1 = (active: boolean): Item[] => [
  g, i("new", 20), i("save", 24), i("open", 24), d(13), s(6), i("print", 24), i("preview", 23), s(4),
  i("cut", 24), i(active ? "copy" : "copyG", 24), i("paste", 24), s(2), i("flash", 28), e(2), x(11),
  i("ubxColor", 23), i("ubx01", 23), i("ubxText", 23), s(6), i("layout1", 22), i("layout2", 24), s(6),
  i("sigma", 22), i("table", 24), d(13), s(8), i("colorMap", 22), d(15), i("chart", 24), d(14),
  i("bars", 24), d(14), s(6), i("dark", 24), i("sat", 22), s(6), i("ring", 22), i("gridG", 24),
];
const row2: Item[] = [
  g, i("plug", 20), d(17), i("wave", 20), d(19), s(1), x(3), p("wand", 23), i("bug", 22), i("antenna", 24),
  e(6), x(2), x(4), i("eject", 28), s(2), i("record", 27), s(2), x(4), h("pause", 19), i("play", 26), d(12),
  i("ff", 26), i("prev", 20), i("next", 26), i("rew", 20), x(10), { k: "slider" },
];
const row3: Item[] = [
  g, i("thH", 14), x(9), i("thW", 14), x(8), i("thC", 14), x(8), i("mPlus0", 20), x(3), i("mPlus1", 20),
  x(4), s(2), x(4), i("gearSave", 18), x(5), i("gearOpen", 18), x(5), i("gearUndo", 18),
];

const Items = ({ items }: { items: Item[] }) => (
  <>
    {items.map((it, idx) => {
      switch (it.k) {
        case "g":
          return (
            <Grip key={idx}>
              <i /><i /><i /><i /><i />
            </Grip>
          );
        case "i":
          return (
            <Cell key={idx} $w={it.w}>
              <S n={it.n} />
            </Cell>
          );
        case "p":
          return (
            <PressedCell key={idx} $w={it.w}>
              <S n={it.n} />
            </PressedCell>
          );
        case "h":
          return (
            <HatchCell key={idx} $w={it.w}>
              <S n={it.n} />
            </HatchCell>
          );
        case "d":
          return <Drop key={idx} $w={it.w} />;
        case "s":
          return <Divider key={idx} $w={it.w} />;
        case "e":
          return <SectionEnd key={idx} $w={it.w} />;
        case "x":
          return <Spacer key={idx} $w={it.w} />;
        default:
          return (
            <SliderBox key={idx}>
              <SliderThumb />
              <SliderTrack />
            </SliderBox>
          );
      }
    })}
  </>
);

/* ---- data ---- */

const MENU: [string, number][] = [
  ["File", 32], ["Edit", 34], ["View", 40], ["Player", 46], ["Receiver", 59], ["Tools", 41], ["Window", 58], ["Help", 30],
];
const CHECK_LABELS = ["Relative Position Valid", "Relative Position Heading Valid", "Relative Position Normalized", "Moving Baseline", "Extrapolated Ref. Position", "Extrapolated Ref. Observ."];
const CHECK_H = [22, 21, 22, 21, 21, 22];

type Readout = { kind: "t"; label: string; value: string; green?: boolean } | { kind: "b"; label: string; min: string; at: number; val: string; max: string };

interface WinCfg {
  active: boolean;
  l: number; t: number; w: number; h: number;
  pl: number; pr: number; titleMl: number;
  title: string;
  tree: { text: string; on?: boolean; focus?: boolean }[];
  treeW: number; paneGap: number; msgW: number; colW: number; rowH: number; mainGap: number;
  vTop: number; hLeft: number; hW: number;
  msgBar: boolean; hThumb: [number, number];
  header: [string, string];
  f: { refId: string; tow: string; fix: boolean; diff: boolean; carrier: string; checks: boolean[]; rows: [string, string][] };
  dockW: number; dockPl: number; dockPr: number; readPl: number;
  readout: Readout[];
  status: { h: number; com: string; cells: number[]; grip: boolean; file?: string };
  sat: boolean;
}

const SAT_GROUPS: [number, boolean][] = [
  [0, false], [10, false], [20, true], [30, true], [41, false], [50, true], [60, true], [70, false], [80, false],
];
const SatBars = () => (
  <SatStrip width="84" height="11" viewBox="0 0 84 11" shapeRendering="crispEdges">
    {SAT_GROUPS.map(([o, b], gi) =>
      (gi === 8 ? [0, 3] : [0, 2, 5, 7]).map((q) => (
        <rect key={`${gi}-${q}`} x={o + q} y="0" width="1" height="11" fill={b && (q === 2 || q === 5) ? "#1414c8" : "#0cae0c"} />
      ))
    )}
  </SatStrip>
);

const CaptionGlyphs = {
  min: <svg width="12" height="6" viewBox="0 0 12 6"><rect x=".5" y="1.500" width="10" height="3" fill="#fff" stroke="#4a5a70" /></svg>,
  max: <svg width="12" height="9" viewBox="0 0 12 9"><rect x=".5" y=".5" width="10" height="7" fill="none" stroke="#4a5a70" /><rect x="3" y="3" width="5" height="2" fill="#4a5a70" /></svg>,
  close: (active: boolean) => (
    <svg width="13" height="10" viewBox="0 0 13 10">
      {!active && <path d="M1 1l10 8M11 1L1 9" stroke="#7c8894" strokeWidth="3.200" />}
      <path d="M1 1l10 8M11 1L1 9" stroke="#fff" strokeWidth={active ? 2.4 : 1.4} />
    </svg>
  ),
};

const Window = ({ c }: { c: WinCfg }) => {
  const check = (on: boolean) => (
    <CheckBox>
      {on && (
        <svg width="9" height="9" viewBox="0 0 9 9"><path d="M1 4l2.500 3L8 1" fill="none" stroke="#111" strokeWidth="2" /></svg>
      )}
    </CheckBox>
  );
  const DR = ({ label, pr, v1, v2, u, mb, pad }: { label: string; pr: number; v1: string; v2: string; u: string; mb: number; pad: number }) => (
    <DataRow $pad={pad} $mb={mb}>
      <DataLabel $pr={pr}>{label}</DataLabel>
      <DataField $w={97}>{v1}</DataField>
      <DataUnit $w={35}>{u}</DataUnit>
      <DataField2 $w={97}>{v2}</DataField2>
      <DataUnit $w={20}>{u}</DataUnit>
    </DataRow>
  );
  return (
    <Frame $l={c.l} $t={c.t} $w={c.w} $h={c.h} $active={c.active}>
      <TitleBar>
        <TitleIcon viewBox="0 0 17 17">
          <circle cx="8.500" cy="8.500" r="8" fill="#111" />
          <text x="5" y="13" fontSize="11" fontWeight="700" fill="#fff" fontFamily="Liberation Sans, sans-serif">P</text>
        </TitleIcon>
        <TitleText $active={c.active} $ml={c.titleMl}>{c.title}</TitleText>
        <CaptionBtn $active={c.active}>{CaptionGlyphs.min}</CaptionBtn>
        <CaptionBtn $active={c.active}>{CaptionGlyphs.max}</CaptionBtn>
        <CaptionBtn $active={c.active} $red>{CaptionGlyphs.close(c.active)}</CaptionBtn>
      </TitleBar>
      <Client $pl={c.pl} $pr={c.pr}>
        <MenuBar>
          <MenuLogo viewBox="0 0 15 16">
            <path d="M0 0h14v11l-4 4H0z" fill="#111" />
            <text x="3.500" y="12" fontSize="11" fontWeight="700" fill="#fff" fontFamily="Liberation Sans, sans-serif">P</text>
          </MenuLogo>
          {MENU.map(([m, w]) => (
            <MenuItem key={m} $w={w} $active={c.active}>{m}</MenuItem>
          ))}
          <MdiGroup>
            <MdiBtn><svg width="9" height="9" viewBox="0 0 9 9"><rect x="1" y="7" width="6" height="2" fill="#7a8a98" /></svg></MdiBtn>
            <MdiBtn><svg width="10" height="10" viewBox="0 0 10 10"><path d="M3.500.5h6v5h-6zM.5 3.500h6v5h-6z" fill="#e0e8f0" stroke="#7a8a98" /></svg></MdiBtn>
            <MdiBtn><svg width="9" height="9" viewBox="0 0 9 9"><path d="M1 1l7 7M8 1L1 8" stroke="#7a8a98" strokeWidth="2" /></svg></MdiBtn>
          </MdiGroup>
        </MenuBar>
        <ToolRow $h={31}><Items items={row1(c.active)} /></ToolRow>
        <ToolRow $h={30}><Items items={row2} /></ToolRow>
        <ToolRow3Wrap $active={c.active}>
          <ToolRow3><Items items={row3} /></ToolRow3>
        </ToolRow3Wrap>
        <MainRow $h={c.rowH} $gap={c.mainGap} $active={c.active}>
          <LeftColumn $w={c.colW}>
            <Panes $gap={c.paneGap}>
              <TreePane $w={c.treeW}>
                <TreeList>
                  {c.tree.map((r) => (
                    <TreeRow key={r.text} $on={r.on}>
                      <Guide $w={19} />
                      <Guide $w={19} />
                      <Guide $w={10} $branch />
                      <TreeLabel $focus={r.focus}>{r.text}</TreeLabel>
                    </TreeRow>
                  ))}
                </TreeList>
                <VBar>
                  <ArrowUp />
                  <ScrollThumbV $top={c.vTop - 10} $h={235}><Grips $v /></ScrollThumbV>
                  <ArrowDown />
                </VBar>
                <HBar>
                  <ArrowLeft />
                  <ScrollThumbH $left={c.hLeft} $w={c.hW}><Grips /></ScrollThumbH>
                  <ArrowRight />
                </HBar>
                <div />
              </TreePane>
              <MessagePane $w={c.msgW}>
                <MessageScroll>
                  <MessageBody>
                    <HeaderLine><span>{c.header[0]}</span><span>{c.header[1]}</span></HeaderLine>
                    <FormRow $h={24} $mt={16}>
                      <RowLabel $w={191}>Reference Station ID:</RowLabel>
                      <Field $w={112} $h={24}>{c.f.refId}</Field>
                    </FormRow>
                    <FormRow $h={23} $mt={9}>
                      <RowLabel $w={191}>GPS ToW:</RowLabel>
                      <Field $w={113} $h={23}>{c.f.tow}</Field>
                      <Unit>[s]</Unit>
                    </FormRow>
                    <FormRow $h={21} $mt={6}>
                      <RowLabel $w={193}>GNSS Fix OK</RowLabel>{check(c.f.fix)}
                    </FormRow>
                    <FormRow $h={21}>
                      <RowLabel $w={193}>Differential Solution</RowLabel>{check(c.f.diff)}
                    </FormRow>
                    <FormRow $h={20} $mt={2}>
                      <RowLabel $w={191}>Carrier Range Status:</RowLabel>
                      <Field $w={112} $h={20}>{c.f.carrier}</Field>
                    </FormRow>
                    {CHECK_LABELS.map((l, idx) => (
                      <FormRow key={l} $h={CHECK_H[idx]} $mt={idx === 0 ? 5 : 0}>
                        <RowLabel $w={193}>{l}</RowLabel>{check(c.f.checks[idx])}
                      </FormRow>
                    ))}
                    <Group>
                      <GroupLegend>Relative Position and Accuracies</GroupLegend>
                      <DR label="N" pr={5} v1={c.f.rows[0][0]} v2={c.f.rows[0][1]} u="[m]" mb={9} pad={7} />
                      <DR label="E" pr={5} v1={c.f.rows[1][0]} v2={c.f.rows[1][1]} u="[m]" mb={9} pad={7} />
                      <DR label="D" pr={5} v1={c.f.rows[2][0]} v2={c.f.rows[2][1]} u="[m]" mb={0} pad={7} />
                      <InnerGroup>
                        <DR label="Length" pr={1} v1={c.f.rows[3][0]} v2={c.f.rows[3][1]} u="[m]" mb={11} pad={0} />
                        <DR label="Heading" pr={1} v1={c.f.rows[4][0]} v2={c.f.rows[4][1]} u="[ °]" mb={0} pad={0} />
                      </InnerGroup>
                    </Group>
                  </MessageBody>
                </MessageScroll>
                {c.msgBar && (
                  <MsgBar>
                    <ArrowLeft />
                    <ScrollThumbH $left={c.hThumb[0]} $w={c.hThumb[1]}><Grips /></ScrollThumbH>
                    <ArrowRight />
                  </MsgBar>
                )}
              </MessagePane>
            </Panes>
            <BottomBar>
              <Cell $w={26}><S n="lock" /></Cell>
              <Divider $w={4} />
              <Cell $w={31}><S n="del" /></Cell>
              <Divider $w={2} />
              <Spacer $w={8} />
              <Cell $w={16}><S n="send" /></Cell>
              <Spacer $w={2} />
              <ToolText $grey $w={26}>Send</ToolText>
              <Spacer $w={14} />
              <Cell $w={14}><S n="poll" /></Cell>
              <Spacer $w={4} />
              <ToolText $w={20}>Poll</ToolText>
              <Spacer $w={9} />
              <PressedCell $w={25}><S n="pollWand" /></PressedCell>
              <Spacer $w={3} />
              <Divider />
              <Spacer $w={7} />
              <Cell $w={16}><S n="docsG" /></Cell>
              <Spacer $w={11} />
              <Cell $w={16}><S n="listIn" /></Cell>
              <Spacer $w={7} />
              <PressedCell $w={25}><S n="listDown" /></PressedCell>
              <Spacer $w={2} />
              <Divider />
              <Spacer $w={8} />
              <Cell $w={16}><S n="printer" /></Cell>
              <Spacer $w={9} />
              <EditBox />
            </BottomBar>
          </LeftColumn>
          <Dock $w={c.dockW} $pl={c.dockPl} $pr={c.dockPr} $teal={c.active}>
            <DockHead>
              <DockLines />
              <DockClose viewBox="0 0 8 8"><path d="M1 1l6 6M7 1L1 7" stroke="#111" strokeWidth="2" /></DockClose>
            </DockHead>
            <Readout>
              {c.readout.map((r) => (
                <ReadRow key={r.label} $pl={c.readPl}>
                  <ReadLabel>{r.label}</ReadLabel>
                  {r.kind === "t" ? (
                    <ReadValue $green={r.green}>{r.value}</ReadValue>
                  ) : (
                    <BarValue>
                      <BarMin>{r.min}</BarMin>
                      <BarMark $at={r.at} />
                      <span>{r.val}</span>
                      <BarMax>{r.max}</BarMax>
                    </BarValue>
                  )}
                </ReadRow>
              ))}
              <ReadRow $pl={c.readPl}>
                <ReadLabel>Satellites</ReadLabel>
                {c.sat && <SatBars />}
              </ReadRow>
            </Readout>
          </Dock>
        </MainRow>
        <StatusBar $h={c.status.h} $teal={c.active}>
          <StatusCell $w={c.status.cells[0]} $plain>Ready</StatusCell>
          <StatusCell $w={c.status.cells[1]}><S n="plug" s={15} />NTRIP client: vrs3.ngii.go.kr:2101</StatusCell>
          <StatusCell $w={c.status.cells[2]} $ml={27}>u-blox Generation 9</StatusCell>
          <StatusCell $w={c.status.cells[3]} $ml={c.status.cells[5]}><S n="plug" s={15} />{c.status.com}</StatusCell>
          {c.status.file ? (
            <StatusCell $w={c.status.cells[4]} $ml={2}>{c.status.file}</StatusCell>
          ) : (
            <StatusCell $w={c.status.cells[4]} $ml={4}>{c.status.grip && <S n="resize" />}</StatusCell>
          )}
        </StatusBar>
      </Client>
    </Frame>
  );
};

const names = (list: string, on: string[] = [], focus = "") =>
  list.split("|").map((t) => ({ text: t, on: on.some((o) => t.startsWith(o)), focus: focus !== "" && t.startsWith(focus) }));

const LEFT: WinCfg = {
  active: true,
  l: 0, t: 104, w: 682, h: 727, pl: 6, pr: 7, titleMl: 3,
  title: "COM29 - u-center 20.06.01 - [Messages - UBX - NAV (Navigation) - RELPOSNED (Relative Positio...",
  tree: names(
    "CLOCK (Clock Status)|DGPS (DGPS Data)|DOP (Dilution of Precision)|EKFSTATUS (Sensor)|EOE (End Of Epoch)|GEOFENCE (Geofence)|HPPOSECEF (High)|HPPOSLLH (High)|NMI (Navigation)|ODO (Odometer)|ORB (Orbit Info)|POSECEF (Position)|POSLLH (Geodetic)|PVT (Navigation)|RELPOSNED (Rel)|RESETODO (Reset)|SAT (Satellite Info)|SBAS (SBAS Status)|SIG (Signal Info)|SLAS (QZSS SLAS)|SOL (Navigation)|STATUS (Navigation)|SVIN (Survey-in)|SVINFO (SV Info)|TIMEBDS (BDS Time)|TIMEGAL (Galileo)|TIMEGLO (GLONASS)|TIMEGPS (GPS Time)|TIMELS (Leap)",
    ["PVT", "RELPOSNED", "SVIN ("],
    "RELPOSNED"
  ),
  treeW: 153, paneGap: 5, msgW: 362, colW: 523, rowH: 562, mainGap: 4,
  vTop: 148, hLeft: 20, hW: 35,
  msgBar: false, hThumb: [0, 0],
  header: ["UBX - NAV (Navigation) - RELPOSNED (Relative Position NED)", "0 s"],
  f: {
    refId: "31", tow: "188572.000", fix: true, diff: true, carrier: "Float",
    checks: [true, true, false, false, false, false],
    rows: [["1765.9743", "0.0117"], ["8334.4178", "0.0154"], ["-87.4471", "0.0353"], ["8519.9088", "0.0153"], ["78.03659", "0.00008"]],
  },
  dockW: 140, dockPl: 3, dockPr: 5, readPl: 5,
  readout: [
    { kind: "t", label: "Longitude", value: "127.14823033 ?" },
    { kind: "t", label: "Latitude", value: "37.29138900 ?" },
    { kind: "t", label: "Altitude", value: "177.000 m" },
    { kind: "t", label: "Altitude (msl)", value: "158.000 m" },
    { kind: "t", label: "TTFF", value: "" },
    { kind: "t", label: "Fix Mode", value: "3D/DGNSS/FLOAT", green: true },
    { kind: "b", label: "3D Acc. [m]", min: "0", at: 23, val: "0.04", max: "0.1" },
    { kind: "b", label: "2D Acc. [m]", min: "0", at: 10, val: "0.02", max: "0.1" },
    { kind: "b", label: "PDOP", min: "0", at: 17, val: "1.7", max: "5" },
    { kind: "b", label: "HDOP", min: "0", at: 8, val: "0.9", max: "5" },
  ],
  status: { h: 20, com: "COM29 460800", cells: [124, 225, 115, 106, 50, 2], grip: false, file: "No file open" },
  sat: false,
};

const RIGHT: WinCfg = {
  active: false,
  l: 685, t: 118, w: 638, h: 718, pl: 7, pr: 6, titleMl: 5,
  title: "COM24 - u-center 20.06.01 - [Messages - UBX - NAV (Navigation) - RELPOSNED (Relativ...",
  tree: names(
    "EOE (End Of Epoch)|GEOFENCE (Geofence)|HPPOSECEF (High)|HPPOSLLH (High)|NMI (Navigation)|ODO (Odometer)|ORB (Orbit Info)|POSECEF (Position)|POSLLH (Geodetic)|PVT (Navigation)|RELPOSNED (Rel)|RESETODO (Reset)|SAT (Satellite Info)|SBAS (SBAS Status)|SIG (Signal Info)|SLAS (QZSS SLAS)|SOL (Navigation)|STATUS (Navigation)|SVIN (Survey-in)|SVINFO (SV Info)|TIMEBDS (BDS Time)|TIMEGAL (Galileo)|TIMEGLO (GLONASS)|TIMEGPS (GPS Time)|TIMELS (Leap)|TIMEQZSS (QZSS)|TIMEUTC (UTC Time)|VELECEF (Velocity)|VELNED (Velocity)",
    ["RELPOSNED"]
  ),
  treeW: 160, paneGap: 4, msgW: 253, colW: 417, rowH: 557, mainGap: 8,
  vTop: 181, hLeft: 19, hW: 41,
  msgBar: true, hThumb: [18, 151],
  header: ["UBX - NAV (Navigation) - RELPOSNED (Relative Position NED)", "0 s"],
  f: {
    refId: "0", tow: "188572.000", fix: true, diff: false, carrier: "Not used",
    checks: [false, false, false, false, false, false],
    rows: [["0.0000", "0.0000"], ["0.0000", "0.0000"], ["0.0000", "0.0000"], ["0.0000", "0.0000"], ["0.00000", "0.00000"]],
  },
  dockW: 198, dockPl: 5, dockPr: 6, readPl: 5,
  readout: [
    { kind: "t", label: "Longitude", value: "127.14812033 ?" },
    { kind: "t", label: "Latitude", value: "37.29134950 ?" },
    { kind: "t", label: "Altitude", value: "185.400 m" },
    { kind: "t", label: "Altitude (msl)", value: "166.400 m" },
    { kind: "t", label: "TTFF", value: "" },
    { kind: "t", label: "Fix Mode", value: "3D", green: true },
    { kind: "t", label: "3D Acc. [m]", value: "" },
    { kind: "t", label: "2D Acc. [m]", value: "" },
    { kind: "b", label: "PDOP", min: "0", at: 29, val: "1.4", max: "5" },
    { kind: "b", label: "HDOP", min: "0", at: 15, val: "0.8", max: "5" },
  ],
  status: { h: 17, com: "COM24 460800", cells: [124, 225, 114, 103, 22, 4], grip: true },
  sat: true,
};

export default function App() {
  return (
    <Desktop>
      <Global />
      <Scribble width="1339" height="104" viewBox="0 0 1339 104">
        <path
          fillRule="evenodd"
          fill="#ff0"
          d="M330 32h6l6-3 30-1 5 3 2 5v14l9 1 9 2 4 5v21l-4 5-12 3-27 2-11-1-11-1v15h-6zM336 56v15l8-1 21 2 13-2 5-1 0-2-4-2h-24V49l13 0 0-5-12 1-13 5z"
        />
        <path
          fillRule="evenodd"
          fill="#ff0"
          d="M932 0l-11 12 1 8-5 17-2 15 4 3 1 5 1 38 4 4h6V86l-1-24 12 16 23 24h21V92L936 47l12-9 5-6V10l-4-10zM935 0v18l-8 10-1 5 9-3 7-8 2-22z"
        />
      </Scribble>
      <BehindWindow />
      <Orb />
      <Window c={LEFT} />
      <Window c={RIGHT} />
    </Desktop>
  );
}
